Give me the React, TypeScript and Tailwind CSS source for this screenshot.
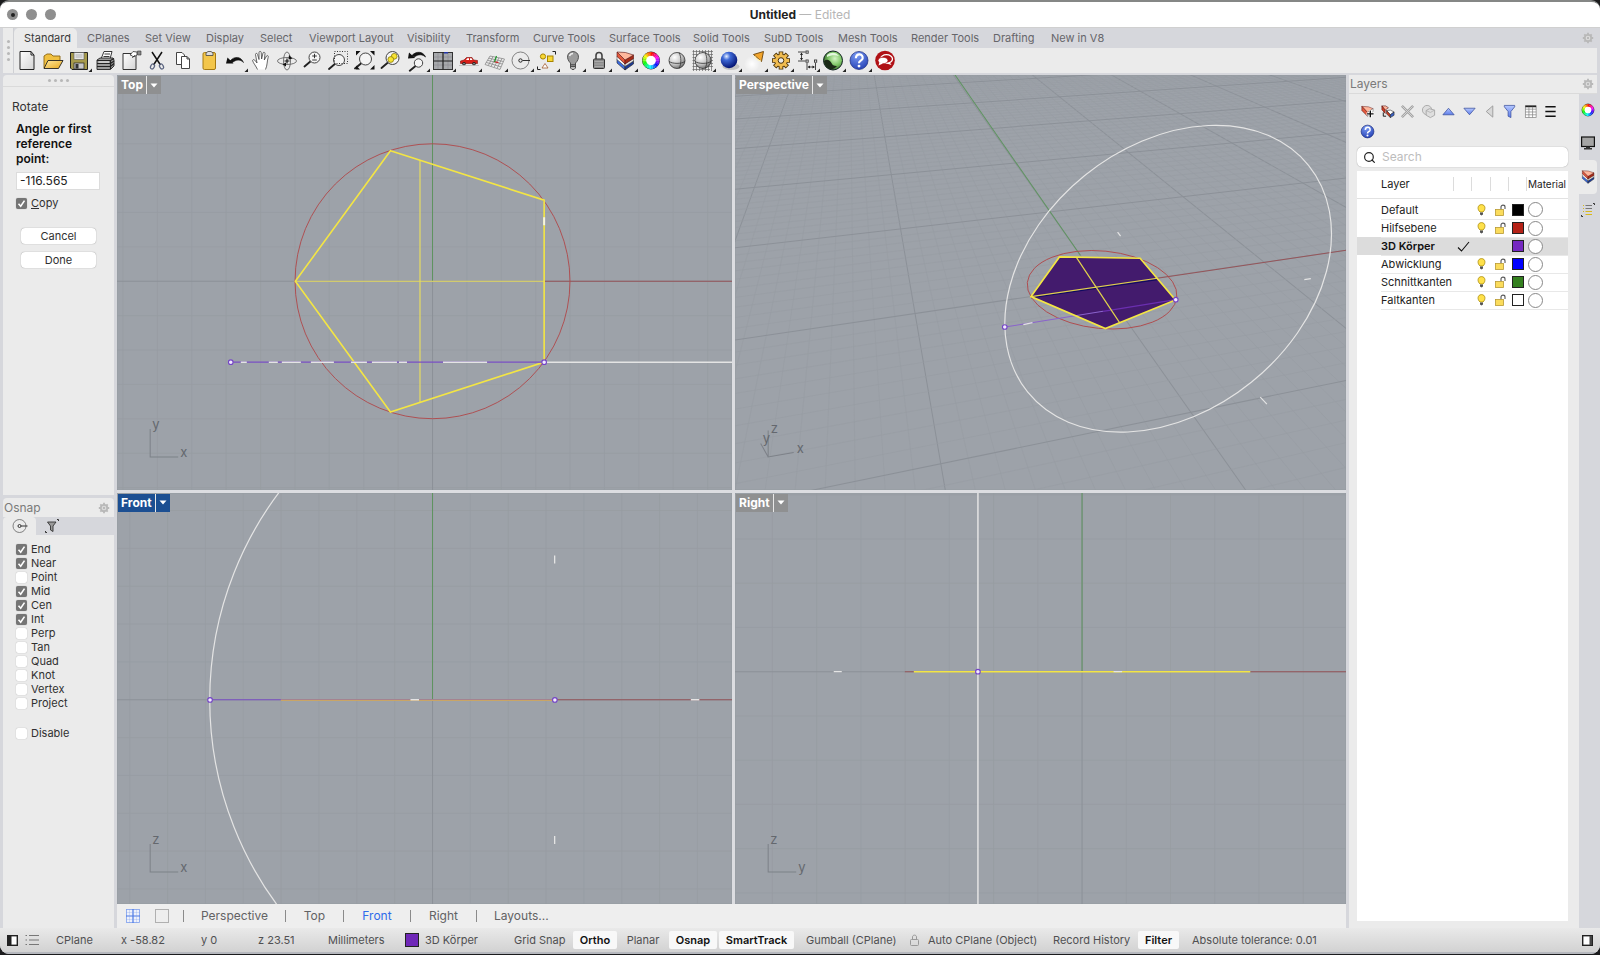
import type { ReactNode } from "react";
import { Search } from "lucide-react";

const TABS = [
  { name: "CPlanes", width: "w-[58px]" },
  { name: "Set View", width: "w-[61px]" },
  { name: "Display", width: "w-[54px]" },
  { name: "Select", width: "w-[49px]" },
  { name: "Viewport Layout", width: "w-[98px]" },
  { name: "Visibility", width: "w-[59px]" },
  { name: "Transform", width: "w-[67px]" },
  { name: "Curve Tools", width: "w-[76px]" },
  { name: "Surface Tools", width: "w-[84px]" },
  { name: "Solid Tools", width: "w-[71px]" },
  { name: "SubD Tools", width: "w-[74px]" },
  { name: "Mesh Tools", width: "w-[73px]" },
  { name: "Render Tools", width: "w-[82px]" },
  { name: "Drafting", width: "w-[58px]" },
  { name: "New in V8", width: "w-[68px]" },
];

const OSNAPS = [
  { name: "End", on: true },
  { name: "Near", on: true },
  { name: "Point", on: false },
  { name: "Mid", on: true },
  { name: "Cen", on: true },
  { name: "Int", on: true },
  { name: "Perp", on: false },
  { name: "Tan", on: false },
  { name: "Quad", on: false },
  { name: "Knot", on: false },
  { name: "Vertex", on: false },
  { name: "Project", on: false },
];

const LAYERS = [
  { name: "Default", color: "#000000", active: false },
  { name: "Hilfsebene", color: "#b52217", active: false },
  { name: "3D Körper", color: "#7528c0", active: true },
  { name: "Abwicklung", color: "#0000ff", active: false },
  { name: "Schnittkanten", color: "#34801f", active: false },
  { name: "Faltkanten", color: "#ffffff", active: false },
];

/* ---------- shared drawings ---------- */

// Gradients used by the toolbar icons, defined once for the page.
function Defs() {
  return (
    <svg width="0" height="0" className="absolute" aria-hidden="true">
      <defs>
        <linearGradient id="paper" x1="0" y1="0" x2="1" y2="1">
          <stop offset="0" stopColor="#fff" />
          <stop offset="1" stopColor="#d4d4d4" />
        </linearGradient>
        <linearGradient id="gold" x1="0" y1="0" x2="1" y2="1">
          <stop offset="0" stopColor="#ffe9a0" />
          <stop offset="1" stopColor="#e8a81c" />
        </linearGradient>
        <linearGradient id="blueTri" x1="0" y1="0" x2="0" y2="1">
          <stop offset="0" stopColor="#b5c8ff" />
          <stop offset="1" stopColor="#5d7cea" />
        </linearGradient>
        <radialGradient id="ball" cx=".35" cy=".3" r=".75">
          <stop offset="0" stopColor="#fff" />
          <stop offset=".6" stopColor="#c4c4c4" />
          <stop offset="1" stopColor="#6c6c6c" />
        </radialGradient>
        <radialGradient id="blueBall" cx=".35" cy=".28" r=".75">
          <stop offset="0" stopColor="#e5efff" />
          <stop offset=".3" stopColor="#3f6ad8" />
          <stop offset="1" stopColor="#02106f" />
        </radialGradient>
        <radialGradient id="greenBall" cx=".6" cy=".4" r=".7">
          <stop offset="0" stopColor="#d4f5c4" />
          <stop offset=".5" stopColor="#7cc465" />
          <stop offset="1" stopColor="#1c4416" />
        </radialGradient>
        <radialGradient id="helpBall" cx=".4" cy=".2" r=".9">
          <stop offset="0" stopColor="#7b9cf5" />
          <stop offset="1" stopColor="#1f3bb0" />
        </radialGradient>
        <radialGradient id="glow" cx=".5" cy=".5" r=".5">
          <stop offset="0" stopColor="#fff" />
          <stop offset="1" stopColor="#fff" stopOpacity="0" />
        </radialGradient>
      </defs>
    </svg>
  );
}

function Wheel({ cx, cy, r }: { cx: number; cy: number; r: number }) {
  const n = 24;
  const mid = r * 0.75;
  const point = (i: number) => {
    const a = (i / n) * Math.PI * 2 - Math.PI / 2;
    return `${cx + mid * Math.cos(a)} ${cy + mid * Math.sin(a)}`;
  };
  return (
    <g fill="none" strokeWidth={r * 0.42}>
      <circle cx={cx} cy={cy} r={r - 0.3} fill="#fff" stroke="#333" strokeWidth="1" />
      {Array.from({ length: n }, (_, i) => (
        <path
          key={i}
          d={`M${point(i)} A${mid} ${mid} 0 0 1 ${point(i + 1.1)}`}
          stroke={`hsl(${(360 - (i * 360) / n) % 360} 95% 52%)`}
        />
      ))}
      <circle cx={cx} cy={cy} r={r * 0.5} fill="#fff" />
    </g>
  );
}

function LayerWedge() {
  return (
    <g strokeLinejoin="round">
      <path d="M5 11 L13 18.500 V22 L5 15 Z" fill="#3c6ce0" stroke="#222" strokeWidth=".6" />
      <path d="M13 18.500 L21.500 13 V16 L13 22 Z" fill="#1d3a94" stroke="#222" strokeWidth=".6" />
      <path d="M5 8 L13 15.500 V18.500 L5 11.500 Z" fill="#fff" stroke="#333" strokeWidth=".5" />
      <path d="M13 15.500 L21.500 10.500 V13 L13 18.500 Z" fill="#e2e2e2" stroke="#333" strokeWidth=".5" />
      <path d="M5 4 L13 12 V16 L5 8.500 Z" fill="#e4593c" stroke="#511" strokeWidth=".6" />
      <path d="M13 12 L21.500 7 V10.500 L13 16 Z" fill="#a52c18" stroke="#511" strokeWidth=".6" />
      <path d="M5 4 L13.500 4.500 L21.500 7 L13 12 Z" fill="#ffb79c" stroke="#511" strokeWidth=".6" />
    </g>
  );
}

function HelpMark({ cx, cy, r }: { cx: number; cy: number; r: number }) {
  return (
    <g>
      <circle cx={cx} cy={cy} r={r} fill="url(#helpBall)" stroke="#15277c" strokeWidth=".7" />
      <path
        d={`M${cx - r * 0.35} ${cy - r * 0.25} C${cx - r * 0.3} ${cy - r * 0.85} ${cx + r * 0.5} ${cy - r * 0.8} ${cx + r * 0.4} ${cy - r * 0.2} C${cx + r * 0.3} ${cy + r * 0.05} ${cx} ${cy} ${cx} ${cy + r * 0.3}`}
        fill="none"
        stroke="#fff"
        strokeWidth={r * 0.24}
      />
      <circle cx={cx} cy={cy + r * 0.62} r={r * 0.16} fill="#fff" />
    </g>
  );
}

function Lens({ x, y, r }: { x: number; y: number; r: number }) {
  return (
    <g>
      <path d={`M${x - r * 0.7} ${y + r * 0.7} L${x - r - 4.5} ${y + r + 3.5}`} stroke="#222" strokeWidth="1.900" strokeLinecap="round" />
      <circle cx={x} cy={y} r={r} fill="#f5f5f5" stroke="#444" strokeWidth="1" />
    </g>
  );
}

function Gear({ className }: { className: string }) {
  return (
    <svg viewBox="0 0 12 12" className={className} aria-hidden="true">
      {[0, 45, 90, 135].map((a) => (
        <path key={a} d="M6 .8 V11.2" stroke="#b8b8b8" strokeWidth="1.800" transform={`rotate(${a} 6 6)`} />
      ))}
      <circle cx="6" cy="6" r="3.200" fill="#dedede" stroke="#b8b8b8" strokeWidth="1.800" />
      <circle cx="6" cy="6" r="1.200" fill="#b8b8b8" />
    </svg>
  );
}

/* ---------- toolbar ---------- */

type Tool = { name: string; menu?: boolean; icon: ReactNode };

const TOOLS: Tool[] = [
  {
    name: "New",
    icon: <path d="M6 3.5 H17 L20 7 V21.5 H6 Z M17 3.5 V7 H20" fill="url(#paper)" stroke="#222" />,
  },
  {
    name: "Open",
    icon: (
      <g stroke="#8a6410" strokeWidth=".9" strokeLinejoin="round">
        <path d="M4 20 V8 L7 6 H11 L13 8 H20 V12" fill="#f0c040" />
        <path d="M4 20.5 L8 12.5 H23 L18.5 20.5 Z" fill="url(#gold)" stroke="#222" />
      </g>
    ),
  },
  {
    name: "Save",
    menu: true,
    icon: (
      <g stroke="#222">
        <path d="M4.500 4.500 H21.500 V21.500 H6 L4.500 20 Z" fill="#a69a4c" />
        <rect x="8" y="4.500" width="10" height="7" fill="#e8e8e8" stroke="#555" strokeWidth=".6" />
        <path d="M9.500 7 H16.500 M9.500 9 H16.500" stroke="#999" strokeWidth=".7" />
        <rect x="8" y="15" width="10" height="6" fill="#c8c8c8" strokeWidth=".7" />
        <rect x="9.500" y="16" width="3" height="4.500" fill="#333" stroke="none" />
      </g>
    ),
  },
  {
    name: "Print",
    icon: (
      <g stroke="#222" strokeWidth=".9" strokeLinejoin="round">
        <path d="M9 11 L12 3.500 H20 L18 11 Z" fill="#fff" />
        <path d="M12.500 6 H18 M11.500 8.500 H17.500" />
        <path d="M5 12 L8 10 H21 L22 12 V18 L18.500 21.500 H5 Z" fill="#9b9b9b" />
        <path d="M5 12.500 H18.500 L22 10.500 M5 15.500 H18.500 L22 13 M5 18.500 H18.500 L22 15.500 M18.500 12 V21" strokeWidth="1.200" />
        <path d="M6.500 14 H17" stroke="#fff" />
      </g>
    ),
  },
  {
    name: "Document Properties",
    icon: (
      <g stroke="#333" strokeLinejoin="round">
        <path d="M5 5.500 H18 V21.500 H5 Z" fill="url(#paper)" />
        <path d="M12 7 L15 3.500 L19 4 V7 L15.500 9 L14 7.500 Z" fill="#fff" strokeWidth=".8" />
        <path d="M14 9.500 L17 7.500" />
        <rect x="19.500" y="3" width="3.500" height="4" fill="#888" strokeWidth=".6" />
      </g>
    ),
  },
  {
    name: "Cut",
    icon: (
      <g fill="none">
        <path d="M8 4 L16.500 17 M18 4 L9.500 17" stroke="#111" strokeWidth="1.500" />
        <ellipse cx="8.500" cy="18.500" rx="1.800" ry="2.600" transform="rotate(30 8.500 18.500)" stroke="#5a6480" strokeWidth="1.200" />
        <ellipse cx="17.500" cy="18.500" rx="1.800" ry="2.600" transform="rotate(-30 17.500 18.500)" stroke="#5a6480" strokeWidth="1.200" />
      </g>
    ),
  },
  {
    name: "Copy",
    icon: (
      <g fill="#fff" stroke="#444">
        <path d="M6.500 4.500 H12 L14.500 7 V16.500 H6.500 Z" />
        <path d="M11.500 8.500 H17 L19.500 11 V20.500 H11.500 Z M17 8.500 V11 H19.500" />
      </g>
    ),
  },
  {
    name: "Paste",
    icon: (
      <g stroke="#a67a12">
        <rect x="7" y="4.500" width="12.500" height="17" rx="1.500" fill="#f3c64b" />
        <path d="M10 7.500 V5 L12 3.500 H15 L17 5 V7.500 Z" fill="#ddd" stroke="#444" strokeWidth=".8" />
      </g>
    ),
  },
  {
    name: "Undo",
    menu: true,
    icon: (
      <g>
        <path d="M8 13 C12 8 19 8 21.500 14.500 C18 11 14 11.500 10.500 14.500 Z" fill="#111" stroke="#111" strokeWidth=".6" />
        <path d="M4 15.500 L5.500 9.500 L11.500 15.500 Z" fill="#111" />
      </g>
    ),
  },
  {
    name: "Pan",
    icon: (
      <path
        d="M9.500 21.500 C8 18 5.500 15.500 4.500 12.500 C5 11.200 6.500 11.500 7.500 13 L9 15 L7.500 6.500 C7.500 5 9.200 5 9.600 6.500 L11 11.500 L11 4.500 C11.200 3 13 3 13.200 4.500 L13.600 11 L15 5 C15.500 3.800 17 4.200 17 5.500 L16.300 12 L18.500 8 C19.300 7 20.700 7.800 20.200 9.200 C19 13 19.500 17 17.500 21.500"
        fill="#fff"
        stroke="#444"
        strokeWidth=".8"
      />
    ),
  },
  {
    name: "Rotate View",
    icon: (
      <g fill="none" stroke="#555" strokeWidth=".8">
        <ellipse cx="13" cy="13" rx="9.500" ry="3.500" />
        <ellipse cx="13" cy="13" rx="3.500" ry="9" />
        <path d="M10.500 13 H15.500 M13 10.500 V15.500" stroke="#111" strokeWidth="1.200" />
        <path d="M12 14.500 L8.500 16.500 L12 18.500 Z M15 7 L18.500 10.500 L14.500 11.500 Z" fill="#111" stroke="none" />
      </g>
    ),
  },
  {
    name: "Zoom Dynamic",
    icon: (
      <g>
        <Lens x={14.5} y={9.5} r={5.5} />
        <path d="M12.200 8 H16.800 M14.500 5.800 V10.200 M12.200 12 H16.800" stroke="#222" strokeWidth=".9" />
      </g>
    ),
  },
  {
    name: "Zoom Window",
    icon: (
      <g>
        <Lens x={13} y={12} r={5.5} />
        <rect x="8.500" y="3.500" width="13" height="12" fill="none" stroke="#333" strokeDasharray="1 1.500" />
      </g>
    ),
  },
  {
    name: "Zoom Extents",
    icon: (
      <g>
        <Lens x={13.5} y={11} r={6} />
        <path d="M4 3 H8.500 L4 7.500 Z M22.500 3 H18 L22.500 7.500 Z M4 21.500 H8 L4 17.500 Z M22.500 21.500 H18 L22.500 17 Z" fill="#111" />
      </g>
    ),
  },
  {
    name: "Zoom Selected",
    icon: (
      <g>
        <Lens x={14.5} y={10} r={6.5} />
        <circle cx="16.200" cy="8.300" r="2.900" fill="#f8e434" stroke="#7a6c00" strokeWidth=".7" />
        <circle cx="12.800" cy="11.500" r="2.900" fill="#f8e434" stroke="#7a6c00" strokeWidth=".7" />
      </g>
    ),
  },
  {
    name: "Undo View",
    menu: true,
    icon: (
      <g>
        <Lens x={14.5} y={15} r={4.2} />
        <path d="M8 7.500 C12 3 19 3 21.500 9 C18.500 6 14 6 10.500 9 Z" fill="#111" stroke="#111" strokeWidth=".7" />
        <path d="M4 10.500 L5 4.500 L11 10 Z" fill="#111" />
      </g>
    ),
  },
  {
    name: "4 Viewports",
    menu: true,
    icon: (
      <g>
        <rect x="3.500" y="4.500" width="19" height="17" fill="#a7a9ac" stroke="#333" />
        <path d="M8 5 V21 M18 5 V21 M4 9 H22 M4 17 H22" stroke="#8a8c90" strokeWidth=".6" />
        <path d="M13 4.500 V21.500 M3.500 13 H22.500" stroke="#222" strokeWidth="1.200" />
        <rect x="14" y="4" width="4" height="1.500" fill="#2335a8" />
      </g>
    ),
  },
  {
    name: "Set View",
    menu: true,
    icon: (
      <g>
        <path d="M4.500 15.500 V13 L8 12 L10.500 9.500 H16 L17.500 12 L21.500 12.500 V15.500 Z" fill="#d8201a" stroke="#7d0c08" strokeWidth=".6" />
        <path d="M10 12 L11.300 10.300 H13 V12 Z M14 10.300 H15.500 L16.500 12 H14 Z" fill="#fff" />
        <circle cx="8" cy="15.800" r="1.800" fill="#222" />
        <circle cx="18" cy="15.800" r="1.800" fill="#222" />
        <circle cx="8" cy="15.800" r=".7" fill="#ccc" />
        <circle cx="18" cy="15.800" r=".7" fill="#ccc" />
        <path d="M3 17.500 H23" stroke="#b5b5b5" strokeWidth=".7" />
      </g>
    ),
  },
  {
    name: "Set CPlane",
    menu: true,
    icon: (
      <g fill="none" stroke="#8a8a8a" strokeWidth=".8">
        <path d="M8 8 L22.500 11 L18 21.500 L3 16.500 Z" />
        <path d="M6.800 10.200 L21.300 13.500 M5.500 12.300 L20.200 16 M4.200 14.400 L19 18.800 M11 8.600 L6.300 17.500 M14 9.200 L9 18.500 M17 9.800 L12 19.500 M20 10.400 L15 20.500" />
        <path d="M12 13.500 L16.500 14.600" stroke="#d02020" strokeWidth="1.200" />
        <path d="M12.500 14 L14.500 8" stroke="#1e9a2c" strokeWidth="1.200" />
      </g>
    ),
  },
  {
    name: "Object Snap",
    menu: true,
    icon: (
      <g fill="none" stroke="#666">
        <circle cx="12.500" cy="12.500" r="8.500" strokeWidth=".8" />
        <circle cx="12.500" cy="12.500" r="1.700" stroke="#222" />
        <path d="M14.500 12.500 H22" stroke="#333" />
      </g>
    ),
  },
  {
    name: "Select",
    menu: true,
    icon: (
      <g stroke="#a88400">
        <circle cx="9" cy="8.500" r="2.600" fill="#f8d834" />
        <rect x="13.500" y="8" width="5.500" height="5.500" fill="#f8d834" />
        <path d="M11 15.500 L14 20 H8 Z" fill="#fff" stroke="#a05a30" strokeWidth=".8" />
        <path d="M18.500 3.500 H21.500 V6.500 M3.500 18.500 V21.500 H6.500" fill="none" stroke="#222" />
      </g>
    ),
  },
  {
    name: "Hide",
    menu: true,
    icon: (
      <g stroke="#444" strokeWidth=".9">
        <path d="M10.500 15 C6 11 6.500 4 13 3.500 C19.500 4 20 11 15.500 15 V17 H10.500 Z" fill="#9c9c9c" />
        <path d="M9.500 8 C10 6.500 11.500 5.500 13 5.500" fill="none" stroke="#eee" strokeWidth="1.500" />
        <path d="M10.500 17 H15.500 V20 L14 21.500 H12 L10.500 20 Z M10.500 18.500 H15.500" fill="#bbb" />
      </g>
    ),
  },
  {
    name: "Lock",
    menu: true,
    icon: (
      <g>
        <path d="M10 12 V7.500 C10 3.500 16 3.500 16 7.500 V12" fill="none" stroke="#444" strokeWidth="1.600" />
        <rect x="7.500" y="11" width="11" height="9.500" rx="1" fill="#8b8b8b" stroke="#333" />
        <path d="M8.500 13.500 H17.500 M8.500 16 H17.500 M8.500 18.500 H17.500" stroke="#b8b8b8" strokeWidth=".7" />
      </g>
    ),
  },
  { name: "Layers", menu: true, icon: <LayerWedge /> },
  { name: "Properties", menu: true, icon: <Wheel cx={13} cy={12.5} r={8.8} /> },
  {
    name: "Shade",
    icon: (
      <g fill="none" stroke="#333" strokeWidth=".8">
        <circle cx="13" cy="12.500" r="8" fill="url(#ball)" />
        <path d="M15 4.500 C17.500 9 17.500 16 15 20.500 M5 13.500 C9 16 17 16 21 13.500" />
      </g>
    ),
  },
  {
    name: "Shaded Viewport",
    menu: true,
    icon: (
      <g fill="none" stroke="#333" strokeWidth=".8">
        <path d="M3.500 2 V23 M6.500 2 V23 M9.500 2 V23 M12.500 2 V23 M15.500 2 V23 M18.500 2 V23 M21.500 2 V23 M2.500 3.500 H23 M2.500 6.500 H23 M2.500 9.500 H23 M2.500 12.500 H23 M2.500 15.500 H23 M2.500 18.500 H23 M2.500 21.500 H20" stroke="#666" strokeWidth=".7" />
        <circle cx="13" cy="12.500" r="8" fill="url(#ball)" />
        <path d="M15 4.500 C17.500 9 17.500 16 15 20.500 M5 13.500 C9 16 17 16 21 13.500" />
      </g>
    ),
  },
  {
    name: "Render",
    menu: true,
    icon: (
      <g>
        <ellipse cx="15" cy="18.500" rx="8.500" ry="3.500" fill="#999" opacity=".5" />
        <circle cx="13" cy="12" r="8.300" fill="url(#blueBall)" />
      </g>
    ),
  },
  {
    name: "Spotlight",
    menu: true,
    icon: (
      <g>
        <circle cx="10" cy="16" r="8" fill="url(#glow)" />
        <path d="M11.500 6.500 L21.500 3.500 L19.500 13.500 Z" fill="#f2a52c" stroke="#6a4208" strokeWidth=".9" />
        <path d="M12.500 8 C14 11 16.500 12.500 19 13" fill="none" stroke="#fff1b8" strokeWidth="1.200" />
      </g>
    ),
  },
  {
    name: "Options",
    menu: true,
    icon: (
      <g>
        {[0, 45, 90, 135].map((a) => (
          <path key={a} d="M13 3.500 V21.500" stroke="#4a3208" strokeWidth="4.600" transform={`rotate(${a} 13 12.500)`} />
        ))}
        <circle cx="13" cy="12.500" r="6.800" fill="#4a3208" />
        {[0, 45, 90, 135].map((a) => (
          <path key={a} d="M13 4.300 V20.700" stroke="#f0bc50" strokeWidth="2.800" transform={`rotate(${a} 13 12.500)`} />
        ))}
        <circle cx="13" cy="12.500" r="6" fill="#f0bc50" />
        <circle cx="13" cy="12.500" r="2.800" fill="#ebebeb" stroke="#4a3208" />
      </g>
    ),
  },
  {
    name: "Dimension",
    menu: true,
    icon: (
      <g fill="none" stroke="#333" strokeWidth=".9">
        <path d="M4 4 H11.500 M4 13 H11.500 M7.500 5 V12" />
        <path d="M7.500 4.500 L6 7 H9 Z M7.500 12.500 L6 10 H9 Z" fill="#222" stroke="none" />
        <rect x="12" y="3" width="2.200" height="2.200" fill="#fff" />
        <rect x="12" y="12" width="2.200" height="2.200" fill="#fff" />
        <rect x="20.500" y="12" width="2.200" height="2.200" fill="#fff" />
        <path d="M13 15 V22 M21.500 15 V22 M14.500 19 H20" />
        <path d="M13.500 19 L16 17.500 V20.500 Z M21 19 L18.500 17.500 V20.500 Z" fill="#222" stroke="none" />
      </g>
    ),
  },
  {
    name: "Grasshopper",
    menu: true,
    icon: (
      <g>
        <circle cx="13" cy="12.500" r="9.500" fill="url(#greenBall)" stroke="#122" />
        <path d="M4 13 C7 10.500 10 12 11.500 15 C12 17 15 18.500 17 18 C15 21 11 22 8.500 20.500 C6 19 4.500 16.500 4 13 Z" fill="#1b2a18" />
        <path d="M7 7 C11 3.500 16 4 19 8 C15 6.500 11 7 7 9 Z" fill="#f2fff0" opacity=".85" />
      </g>
    ),
  },
  { name: "Help", menu: true, icon: <HelpMark cx={13} cy={12.5} r={9} /> },
  {
    name: "Forum",
    icon: (
      <g>
        <circle cx="13" cy="12.500" r="9.800" fill="#b01116" />
        <path d="M17.500 14 L19.500 17 L14.500 15.500 Z" fill="#fff" />
        <ellipse cx="14.500" cy="11" rx="6" ry="4.300" fill="#b01116" stroke="#fff" strokeWidth="1.300" />
        <ellipse cx="11" cy="12.500" rx="5" ry="3.300" fill="#fff" stroke="#b01116" strokeWidth=".8" />
        <path d="M7.500 14 L6.500 17.500 L11 15.500 Z" fill="#fff" />
      </g>
    ),
  },
];

function Toolbar() {
  return (
    <div className="flex bg-[#ebebeb]">
      <div className="flex w-[11px] shrink-0 flex-col items-center justify-center gap-[3px] border-r border-[#cfd0d4]">
        {[0, 1, 2, 3].map((i) => (
          <span key={i} className="size-[3px] rounded-full bg-[#b8b8b8]" />
        ))}
      </div>
      <div className="min-w-0 flex-1">
        <div className="flex h-5 items-center bg-[#d6d7dc] text-[11px] text-[#66666a]">
          <button className="h-full w-[63px] shrink-0 rounded-t-[5px] bg-[#ebebeb] pl-[10px] text-left text-[#3a3a3a]">Standard</button>
          <nav className="flex min-w-0 flex-1 overflow-hidden pl-[10px]">
            {TABS.map((t) => (
              <button key={t.name} className={`shrink-0 whitespace-nowrap text-left ${t.width}`}>
                {t.name}
              </button>
            ))}
          </nav>
          <Gear className="mr-[3px] size-3" />
        </div>
        <div className="flex h-[25px] overflow-hidden">
          {TOOLS.map((t) => (
            <button key={t.name} aria-label={t.name} className="h-6 w-[26px] shrink-0">
              <svg viewBox="0 0 26 24" className="h-6 w-[26px]" fill="none">
                {t.icon}
                {t.menu && <path d="M26 20.500 V24 H22.500 Z" fill="#222" />}
              </svg>
            </button>
          ))}
        </div>
      </div>
    </div>
  );
}

/* ---------- left column ---------- */

function Check({ label, on, children }: { label: string; on: boolean; children?: ReactNode }) {
  return (
    <label className="flex h-[14px] items-center gap-1 text-[11px] text-[#303030]">
      <span className="relative size-[11px]">
        <input
          type="checkbox"
          defaultChecked={on}
          aria-label={label}
          className="peer block size-[11px] appearance-none rounded-[2px] bg-white shadow-[0_0_1px_rgba(0,0,0,0.35)] checked:bg-[#757575]"
        />
        <svg viewBox="0 0 11 11" className="pointer-events-none absolute inset-0 hidden size-[11px] peer-checked:block">
          <path d="M2.500 5.800 L4.700 8.200 L8.500 2.600" fill="none" stroke="#fff" strokeWidth="1.600" />
        </svg>
      </span>
      {children ?? label}
    </label>
  );
}

function CommandPanel() {
  return (
    <section className="h-[420px] shrink-0 rounded-t-[4px] bg-[#ebebeb]">
      <div className="flex h-3 items-center justify-center gap-[3px] border-b border-[#dadada]">
        {[0, 1, 2, 3].map((i) => (
          <span key={i} className="size-[3px] rounded-full bg-[#b8b8b8]" />
        ))}
      </div>
      <h2 className="mt-3 ml-[9px] text-[12px] leading-[15px] text-[#333]">Rotate</h2>
      <div className="mt-[7px] ml-[13px]">
        <label htmlFor="angle" className="block w-[90px] text-[12px] leading-[15px] font-semibold text-[#111]">
          Angle or first reference point:
        </label>
        <input
          id="angle"
          defaultValue="-116.565"
          className="mt-[6px] mb-[6px] block h-[18px] w-[84px] border border-[#dcdcdc] bg-white px-[3px] text-[12px] text-[#222] outline-none"
        />
        <Check label="Copy" on>
          <span>
            <u>C</u>opy
          </span>
        </Check>
      </div>
      <div className="mt-[18px] flex flex-col items-center gap-2">
        <button className="h-4 w-[75px] rounded-[4px] bg-white text-[11px] leading-4 text-[#303030] shadow-[0_0_1px_rgba(0,0,0,0.5)]">Cancel</button>
        <button className="h-4 w-[75px] rounded-[4px] bg-white text-[11px] leading-4 text-[#303030] shadow-[0_0_1px_rgba(0,0,0,0.5)]">Done</button>
      </div>
    </section>
  );
}

function OsnapPanel() {
  return (
    <section className="min-h-0 flex-1 overflow-hidden rounded-t-[4px] bg-[#ebebeb]">
      <header className="flex h-[19px] items-center justify-between px-1 pl-px text-[12px] text-[#7a7a7a]">
        <h2>Osnap</h2>
        <Gear className="size-3" />
      </header>
      <div className="flex h-[18px] bg-[#d6d7dc]">
        <button aria-label="Snaps" className="flex w-[33px] items-center justify-center rounded-t-[4px] bg-[#ebebeb]">
          <svg viewBox="0 0 16 16" className="size-4" fill="none" stroke="#666">
            <circle cx="7.500" cy="8" r="6.500" strokeWidth=".8" />
            <circle cx="7.500" cy="8" r="1.500" stroke="#333" />
            <path d="M9 8 H15.500" stroke="#333" />
          </svg>
        </button>
        <button aria-label="Selection filter" className="flex w-8 items-center justify-center">
          <svg viewBox="0 0 16 16" className="size-4" fill="none" stroke="#333">
            <path d="M3.500 4 H12 L9 8 V13.500 L6.500 12 V8 Z" fill="#9a9a9a" strokeWidth=".9" />
            <path d="M13 1.500 H14.500 V3 M1.500 13 V14.500 H3" />
          </svg>
        </button>
      </div>
      <div className="mt-[7px] ml-[13px]">
        {OSNAPS.map((o) => (
          <Check key={o.name} label={o.name} on={o.on} />
        ))}
        <div className="mt-4">
          <Check label="Disable" on={false} />
        </div>
      </div>
    </section>
  );
}

/* ---------- viewports ---------- */

const MINOR = "#979ca3";
const MAJOR = "#8c9198";
const RED = "#95555a";
const CURVE_RED = "#b0474a";
const GREEN = "#5f9460";
const YELLOW = "#f3e544";
const PURPLE = "#7a4fc4";
const WHITE = "#e4e4e4";

type GridProps = { ox: number; oy: number; step: number; x0: number; x1: number; y0: number; y1: number };

function PlanGrid({ ox, oy, step, x0, x1, y0, y1 }: GridProps) {
  const ks = Array.from({ length: 41 }, (_, i) => i - 20).filter((k) => k !== 0);
  return (
    <g stroke={MINOR}>
      {ks.map((k) => (
        <path key={k} d={`M${ox + k * step} ${y0} V${y1} M${x0} ${oy + k * step} H${x1}`} strokeWidth=".8" />
      ))}
      <path d={`M${ox} ${y0} V${y1} M${x0} ${oy} H${x1}`} stroke={MAJOR} />
    </g>
  );
}

// World axes project towards two vanishing points on one level horizon.
const ORIGIN = { x: 1101.9, y: 285.8 };
const VX = { x: 3549.3, y: -73.3 };
const VY = { x: 849, y: -73.3 };
const ALPHA = 0.007088;
const BETA = 0.02599;

function project(x: number, y: number) {
  const w = 1 + x * ALPHA + y * BETA;
  return {
    x: (ORIGIN.x + x * ALPHA * VX.x + y * BETA * VY.x) / w,
    y: (ORIGIN.y + x * ALPHA * VX.y + y * BETA * VY.y) / w,
  };
}

function PerspectiveGrid() {
  const lines: { d: string; major: boolean }[] = [];
  for (let k = -50; k <= 64; k++) {
    const p = project(k, 0);
    const m = (p.x - VY.x) / (p.y - VY.y);
    lines.push({ d: `M${VY.x + m * (70 - VY.y)} 70 L${VY.x + m * (495 - VY.y)} 495`, major: k % 10 === 0 });
  }
  for (let k = -24; k <= 90; k++) {
    const p = project(0, k);
    const m = (p.y - VX.y) / (p.x - VX.x);
    lines.push({ d: `M730 ${VX.y + m * (730 - VX.x)} L1350 ${VX.y + m * (1350 - VX.x)}`, major: k % 10 === 0 });
  }
  return (
    <g>
      {lines.map((l, i) => (
        <path key={i} d={l.d} stroke={l.major ? MAJOR : MINOR} strokeWidth={l.major ? 1 : 0.6} />
      ))}
    </g>
  );
}

function AxisIcon({ x, y, up, side }: { x: number; y: number; up: string; side: string }) {
  return (
    <g className="text-[13px]" fill="#64686e">
      <path d={`M${x} ${y - 28} V${y} H${x + 28}`} fill="none" stroke="#7d8188" />
      <text x={x + 2} y={y - 28}>{up}</text>
      <text x={x + 30} y={y}>{side}</text>
    </g>
  );
}

function Handle({ x, y }: { x: number; y: number }) {
  return <circle cx={x} cy={y} r="2.300" fill="#f2eaff" stroke="#7444c6" strokeWidth="1.100" />;
}

function Viewport({ name, box, active, children }: { name: string; box: string; active?: boolean; children: ReactNode }) {
  const tone = active ? "bg-[#1c4f92]" : "bg-[#8f9091]";
  return (
    <section className="relative min-h-0 min-w-0 overflow-hidden bg-[#9da2a9] shadow-[inset_0_0_1px_#7c8086]">
      <svg viewBox={box} preserveAspectRatio="xMidYMid slice" className="block h-full w-full" fill="none">
        {children}
      </svg>
      <div className="absolute top-px left-px flex h-[18px] text-[12px] font-bold text-white">
        <button className={`px-[3px] ${tone}`}>{name}</button>
        <span className="w-px bg-[#e8e8e8]" />
        <button aria-label={`${name} menu`} className={`flex w-[14px] items-center justify-center ${tone}`}>
          <svg viewBox="0 0 8 5" className="h-[5px] w-2">
            <path d="M.5 .5 H7.500 L4 4.500 Z" fill="#fff" />
          </svg>
        </button>
      </div>
    </section>
  );
}

function Viewports() {
  return (
    <div className="grid min-h-0 flex-1 grid-cols-[615fr_611fr] grid-rows-[414fr_411fr] gap-[3px] bg-[#dcdde1]">
      <Viewport name="Top" box="117 75 615 414">
        <PlanGrid ox={432.5} oy={281} step={34.35} x0={110} x1={740} y0={70} y1={495} />
        <path d="M432.500 70 V281" stroke={GREEN} />
        <path d="M544 281 H740" stroke={RED} />
        <circle cx="432.500" cy="281" r="137.300" stroke={CURVE_RED} strokeWidth=".9" />
        <path d="M295.500 281 H544 M420 160.500 V402" stroke="#e6dc60" strokeWidth="1.200" />
        <path d="M390.500 150.700 L544 200 V361.700 L390.500 411.600 L295.500 281 Z" stroke={YELLOW} strokeWidth="1.600" />
        <path d="M544 217 V225" stroke="#f5f5e0" strokeWidth="2" />
        <path d="M231 361.800 H544" stroke={PURPLE} strokeWidth="1.300" />
        <path
          d="M241 361.800 H247 M269 361.800 H278 M282 361.800 H301 M311 361.800 H334 M351 361.800 H367 M372 361.800 H397 M399 361.800 H407 M443 361.800 H487 M544 361.800 H740"
          stroke={WHITE}
          strokeWidth="1.500"
        />
        <Handle x={231} y={361.8} />
        <Handle x={544} y={361.8} />
        <AxisIcon x={150.5} y={456.5} up="y" side="x" />
      </Viewport>

      <Viewport name="Perspective" box="735 75 611 414">
        <PerspectiveGrid />
        <path d="M951.700 70 L1080.300 255" stroke={GREEN} />
        <path d="M1157 278 L1350 249.400" stroke={RED} />
        <ellipse cx="1102" cy="289.500" rx="75" ry="38.700" transform="rotate(5.600 1102 289.500)" stroke={CURVE_RED} strokeWidth=".9" />
        <path d="M1059.400 256.700 L1140 258 L1175.300 299.700 L1105.300 328.300 L1031 296.300 Z" fill="#431b6d" />
        <path d="M1031 297.500 L1157 279.500" stroke="#0c0a60" />
        <path d="M1004.800 326.700 L1103 311" stroke="#8a63cc" />
        <path d="M1103 311 L1175.600 299.400" stroke="#6b2fb0" strokeWidth="1.200" />
        <path d="M1031 296.300 L1157 278 M1076 256.700 L1119.500 322.300" stroke="#e0d24c" strokeWidth="1.200" />
        <path d="M1059.400 256.700 L1140 258 L1175.300 299.700 L1105.300 328.300 L1031 296.300 Z" stroke={YELLOW} strokeWidth="1.700" />
        <ellipse cx="1168" cy="278.500" rx="180.300" ry="132.600" transform="rotate(-38.950 1168 278.500)" stroke={WHITE} strokeWidth="1.200" />
        <path d="M1023.400 324.300 L1032.500 322.300 M1117.500 232 L1120.500 236 M1304 279.300 L1310.500 278.300 M1260 396.700 L1266.600 403.700" stroke={WHITE} strokeWidth="1.200" />
        <Handle x={1004.8} y={326.7} />
        <Handle x={1175.6} y={299.4} />
        <path d="M768.500 430 V456.500 L794 452 M768.500 456.500 L761 443" stroke="#7d8188" />
        <g className="text-[13px]" fill="#64686e">
          <text x="771" y="433">z</text>
          <text x="763" y="443">y</text>
          <text x="797" y="453">x</text>
        </g>
      </Viewport>

      <Viewport name="Front" box="117 492.500 615 411" active>
        <PlanGrid ox={432.5} oy={699} step={37.8} x0={110} x1={740} y0={485} y1={910} />
        <path d="M432.500 485 V699" stroke={GREEN} />
        <path d="M555 699 H740" stroke={RED} />
        <path d="M210 699 H555" stroke={PURPLE} />
        <path d="M281 699.500 H553" stroke="#c9a566" strokeWidth="1.300" />
        <circle cx="554.700" cy="699.200" r="344.700" stroke={WHITE} strokeWidth="1.200" />
        <path d="M410.500 699 H419 M690.500 699 H699 M554.500 555 V563 M554.500 835 V843" stroke={WHITE} strokeWidth="1.300" />
        <Handle x={210.3} y={699.2} />
        <Handle x={554.7} y={699.2} />
        <AxisIcon x={150.5} y={871} up="z" side="x" />
      </Viewport>

      <Viewport name="Right" box="735 492.500 611 411">
        <PlanGrid ox={1082} oy={671} step={44.18} x0={730} x1={1350} y0={485} y1={910} />
        <path d="M1082 485 V671" stroke={GREEN} />
        <path d="M905 671 H914 M1250 671 H1350" stroke={RED} />
        <path d="M914 671 H1250" stroke={YELLOW} strokeWidth="1.600" />
        <path d="M978 485 V910" stroke={WHITE} strokeWidth="1.500" />
        <path d="M834 671 H842 M1113.500 671 H1122" stroke={WHITE} strokeWidth="1.300" />
        <Handle x={978} y={671} />
        <AxisIcon x={768.5} y={871} up="z" side="y" />
      </Viewport>
    </div>
  );
}

function ViewportTabs() {
  const bar = <span className="h-3 w-px bg-[#8a8a8a]" />;
  return (
    <div className="flex h-6 shrink-0 items-center bg-[#eeeeee] pb-px pl-[9px] text-[12px] text-[#626264]">
      <button aria-label="Four viewports" className="w-[29px]">
        <svg viewBox="0 0 14 14" className="block size-[14px]" fill="#eef1fa" stroke="#7d9fee">
          <rect x=".5" y=".5" width="13" height="13" strokeWidth=".8" />
          <path d="M7 0 V14 M0 7 H14" stroke="#4b79e4" strokeWidth="1.200" />
          <path d="M0 3.500 H14 M0 10.500 H14 M3.500 0 V14 M10.500 0 V14" strokeWidth=".3" />
        </svg>
      </button>
      <button aria-label="Single viewport" className="w-7">
        <svg viewBox="0 0 14 14" className="block size-[14px]" fill="none" stroke="#b0b0b0">
          <rect x=".5" y=".5" width="13" height="13" />
        </svg>
      </button>
      {bar}
      <button className="w-[101px]">Perspective</button>
      {bar}
      <button className="w-[57px]">Top</button>
      {bar}
      <button className="w-[66px] text-[#2f6bea]">Front</button>
      {bar}
      <button className="w-[65px]">Right</button>
      {bar}
      <button className="ml-[17px]">Layouts...</button>
    </div>
  );
}

/* ---------- layers panel ---------- */

const LAYER_TOOLS: Tool[] = [
  {
    name: "New layer",
    icon: (
      <g>
        <path d="M2 2.500 L9 3 L14 5 L8 9 Z" fill="#ffb79c" stroke="#733" strokeWidth=".6" />
        <path d="M2 2.500 L8 9 V13 L2 7 Z" fill="#e4593c" stroke="#511" strokeWidth=".6" />
        <path d="M8 9 L14 5 V8 L8 13 Z" fill="#fff" stroke="#777" strokeWidth=".6" />
        <path d="M7 10.500 H15 M11 6.500 V14.500" stroke="#fff" strokeWidth="3" />
        <path d="M7.500 10.500 H14.500 M11 7 V14" stroke="#111" strokeWidth="1.500" />
      </g>
    ),
  },
  {
    name: "New sublayer",
    icon: (
      <g strokeWidth=".6">
        <path d="M2 2 L6 2 L9 4 L5.500 6.500 Z" fill="#ffb79c" stroke="#511" />
        <path d="M2 2 L5.500 6.500 V10 L2 6 Z" fill="#d13c22" stroke="#511" />
        <path d="M7 7 L11 6.500 L15 8.500 L11 11.500 Z" fill="#fff" stroke="#222" />
        <path d="M7 7 L11 11.500 V14.500 L7 10.500 Z" fill="#d13c22" stroke="#222" />
        <path d="M11 11.500 L15 8.500 V12 L11 14.500 Z" fill="#3a62c8" stroke="#222" />
        <path d="M3.500 9 V13 H6.500" fill="none" stroke="#111" strokeWidth="1" />
      </g>
    ),
  },
  {
    name: "Delete",
    icon: (
      <g>
        <path d="M2 2 L14 14 M14 2 L2 14" stroke="#a5a5a5" strokeWidth="2.800" />
        <path d="M2.500 2.500 L13.500 13.500 M13.500 2.500 L2.500 13.500" stroke="#d5d5d5" strokeWidth="1" />
      </g>
    ),
  },
  {
    name: "Duplicate",
    icon: (
      <g fill="#dedede" stroke="#a8a8a8">
        <circle cx="6.500" cy="6.500" r="5" />
        <path d="M5.500 7 L9 5 L14.500 6.500 V12 L10 14.500 L5.500 12 Z" />
        <path d="M5.500 7 L10 9 L14.500 6.500" fill="none" strokeWidth=".7" />
      </g>
    ),
  },
  { name: "Move up", icon: <path d="M2 11.500 L8 4.500 L14 11.500 Z" fill="url(#blueTri)" stroke="#3b509c" strokeWidth=".8" /> },
  { name: "Move down", icon: <path d="M2 4.500 L8 11.500 L14 4.500 Z" fill="url(#blueTri)" stroke="#3b509c" strokeWidth=".8" /> },
  { name: "Move out", icon: <path d="M11.500 2 L4.500 8 L11.500 14 Z" fill="#d8d8d8" stroke="#9c9c9c" /> },
  { name: "Filter", icon: <path d="M2.500 1.500 H13.500 V3 L9.500 8 V14.500 L6.500 13 V8 L2.500 3 Z" fill="url(#blueTri)" stroke="#3b509c" strokeWidth=".8" /> },
  {
    name: "Columns",
    icon: (
      <g stroke="#888" strokeWidth=".8">
        <rect x="2.500" y="2" width="11.500" height="12.500" fill="#fff" />
        <path d="M2.500 2.500 H14" stroke="#222" strokeWidth="2" />
        <path d="M2.500 5.500 H14 M2.500 8.500 H14 M2.500 11.500 H14 M6.300 3 V14.500 M10.200 3 V14.500" />
      </g>
    ),
  },
  { name: "Menu", icon: <path d="M2.500 3 H13.500 M2.500 8 H13.500 M2.500 13 H13.500" stroke="#111" strokeWidth="1.500" /> },
  { name: "Help", icon: <HelpMark cx={8} cy={8} r={6.8} /> },
];

function LayersPanel() {
  const cell = "border-b border-[#e8e8e8]";
  return (
    <section className="flex w-[248px] shrink-0 flex-col bg-[#ebebeb]">
      <header className="flex h-[19px] shrink-0 items-center justify-between border-b border-[#dadada] pr-[3px] pl-px text-[12px] text-[#7a7a7a]">
        <h2>Layers</h2>
        <Gear className="size-3" />
      </header>
      <div className="flex min-h-0 flex-1">
        <div className="flex min-w-0 flex-1 flex-col pr-[11px] pl-2">
          <div className="mt-[7px] grid w-[204px] grid-cols-10">
            {LAYER_TOOLS.map((t) => (
              <button key={t.name} aria-label={t.name} className="flex h-5 items-center justify-center">
                <svg viewBox="0 0 16 16" className="size-[15px]" fill="none">
                  {t.icon}
                </svg>
              </button>
            ))}
          </div>
          <label className="mt-[6px] flex h-5 shrink-0 items-center gap-[6px] rounded-[5px] bg-white px-[6px] shadow-[0_0_1px_rgba(0,0,0,0.45)]">
            <Search className="size-[13px] text-[#222]" strokeWidth={2.2} />
            <input aria-label="Search layers" placeholder="Search" className="min-w-0 flex-1 text-[12px] outline-none placeholder:text-[#bdbdbd]" />
          </label>
          <div className="mt-1 mb-[7px] min-h-0 flex-1 overflow-hidden bg-white">
            <table className="w-full table-fixed border-collapse text-left text-[11px] text-[#222]">
              <colgroup>
                <col className="w-[24px]" />
                <col className="w-[72px]" />
                <col className="w-[18px]" />
                <col className="w-[19px]" />
                <col className="w-[18px]" />
                <col className="w-[18px]" />
                <col />
              </colgroup>
              <thead>
                <tr className="h-[27px] border-b border-[#e2e2e2]">
                  <th />
                  <th className="font-normal">Layer</th>
                  {[0, 1, 2, 3].map((i) => (
                    <th key={i}>
                      <span className="block h-[14px] border-l border-[#dcdcdc]" />
                    </th>
                  ))}
                  <th className="text-[10px] font-normal">
                    <span className="block h-[14px] border-l border-[#dcdcdc] pl-px leading-[14px]">Material</span>
                  </th>
                </tr>
              </thead>
              <tbody>
                <tr className="h-[3px]">
                  <td colSpan={7} />
                </tr>
                {LAYERS.map((l) => (
                  <tr key={l.name} className={l.active ? "h-[18px] bg-[#dcdcdc] font-semibold text-[#111]" : "h-[18px]"}>
                    <td />
                    <td className={`whitespace-nowrap ${cell}`}>{l.name}</td>
                    <td className={cell}>
                      {l.active && (
                        <svg viewBox="0 0 13 11" className="ml-1 h-[11px] w-[13px]" fill="none">
                          <path d="M1 6.500 L4.500 10 L12 1" stroke="#111" strokeWidth="1.100" />
                        </svg>
                      )}
                    </td>
                    <td className={cell}>
                      {!l.active && (
                        <svg viewBox="0 0 9 12" className="ml-[6px] h-3 w-[9px]">
                          <path d="M3 8 C0 5.500 .5 .6 4.500 .6 C8.500 .6 9 5.500 6 8 Z" fill="#ffe14a" stroke="#a98a08" strokeWidth=".8" />
                          <path d="M3 8.500 H6 V10.500 L4.500 11.600 L3 10.500 Z" fill="#555" />
                        </svg>
                      )}
                    </td>
                    <td className={cell}>
                      {!l.active && (
                        <svg viewBox="0 0 11 12" className="ml-[5px] h-3 w-[11px]">
                          <path d="M6 5.500 V3 C6 .5 10 .5 10 3 V5" fill="none" stroke="#555" strokeWidth="1.100" />
                          <rect x=".5" y="5.500" width="8" height="6" fill="#fbdc5c" stroke="#b89a34" strokeWidth=".8" />
                        </svg>
                      )}
                    </td>
                    <td className={cell}>
                      <span className="ml-1 block size-3 border border-[#222]" style={{ backgroundColor: l.color }} />
                    </td>
                    <td className={cell}>
                      <span className="ml-[2px] block size-[15px] rounded-full border border-[#888] bg-white" />
                    </td>
                  </tr>
                ))}
              </tbody>
            </table>
          </div>
        </div>
        <SideTabs />
      </div>
    </section>
  );
}

function SideTabs() {
  return (
    <div className="flex w-[18px] shrink-0 flex-col bg-[#d6d7dc]">
      <button aria-label="Properties" className="flex h-8 items-center justify-center">
        <svg viewBox="0 0 14 14" className="size-[14px]">
          <Wheel cx={7} cy={7} r={6.2} />
        </svg>
      </button>
      <button aria-label="Display" className="flex h-[34px] items-center justify-center">
        <svg viewBox="0 0 14 14" className="size-[14px]">
          <rect x=".6" y="1" width="12.800" height="9.500" fill="#a5a5a5" stroke="#111" strokeWidth="1.200" />
          <path d="M5 10.500 H9 V12 H11 V13.500 H3 V12 H5 Z" fill="#333" />
        </svg>
      </button>
      <button aria-label="Layers" className="flex h-[34px] items-center justify-center rounded-r-[4px] bg-[#ebebeb]">
        <svg viewBox="3 3 20 20" className="size-[14px]" fill="none">
          <LayerWedge />
        </svg>
      </button>
      <button aria-label="Notes" className="flex h-8 items-center justify-center">
        <svg viewBox="0 0 14 14" className="size-[14px]" fill="none">
          <path d="M4.500 2.500 H11 M4.500 5.500 H11" stroke="#777" />
          <path d="M4.500 8.500 H11 M4.500 11.500 H11 M2 2.500 H3 M2 5.500 H3 M2 8.500 H3" stroke="#d9b91c" strokeWidth="1.200" />
          <path d="M12 .5 H13.500 V2 M.5 12 V13.500 H2" stroke="#333" />
        </svg>
      </button>
    </div>
  );
}

/* ---------- status bar ---------- */

function Toggle({ label, className }: { label: string; className: string }) {
  return (
    <button aria-pressed="true" className={`h-[18px] rounded-[2px] bg-[#f8f8f8] font-semibold text-[#111] ${className}`}>
      {label}
    </button>
  );
}

function StatusBar() {
  return (
    <footer className="flex h-6 shrink-0 items-center overflow-hidden bg-linear-to-b from-[#e9e9e9] to-[#d2d2d2] pl-[7px] text-[11px] whitespace-nowrap text-[#505052]">
      <button aria-label="Toggle left panel" className="w-[18px] shrink-0">
        <svg viewBox="0 0 11 11" className="size-[11px]">
          <rect x=".7" y=".7" width="9.600" height="9.600" fill="#fff" stroke="#222" strokeWidth="1.400" />
          <rect x="1" y="1" width="3.500" height="9" fill="#222" />
        </svg>
      </button>
      <button aria-label="Command list" className="w-[31px] shrink-0">
        <svg viewBox="0 0 14 12" className="h-3 w-[14px]" fill="none" stroke="#777">
          <path d="M4 1.500 H14 M4 6 H14 M4 10.500 H14 M.5 1.500 H2 M.5 6 H2 M.5 10.500 H2" strokeWidth="1.200" />
        </svg>
      </button>
      <button className="w-[65px] shrink-0 text-left">CPlane</button>
      <span className="w-20 shrink-0">x -58.82</span>
      <span className="w-[57px] shrink-0">y 0</span>
      <span className="w-[70px] shrink-0">z 23.51</span>
      <button className="w-[77px] shrink-0 text-left">Millimeters</button>
      <button className="flex w-[109px] shrink-0 items-center gap-[6px]">
        <span className="size-[14px] border border-[#222] bg-[#6f27b8]" />
        3D Körper
      </button>
      <button className="w-[59px] shrink-0 text-left">Grid Snap</button>
      <Toggle label="Ortho" className="w-11 shrink-0" />
      <button className="w-[52px] shrink-0">Planar</button>
      <Toggle label="Osnap" className="w-12 shrink-0" />
      <Toggle label="SmartTrack" className="ml-[2px] w-[75px] shrink-0" />
      <button className="ml-3 w-[104px] shrink-0 text-left">Gumball (CPlane)</button>
      <button className="flex w-[143px] shrink-0 items-center gap-[9px]">
        <svg viewBox="0 0 9 12" className="h-3 w-[9px]" fill="none" stroke="#999">
          <path d="M2.500 5.500 V3 C2.500 .5 6.500 .5 6.500 3 V5.500" />
          <rect x=".5" y="5.500" width="8" height="6" rx="1" />
        </svg>
        Auto CPlane (Object)
      </button>
      <button className="w-[85px] shrink-0 text-left">Record History</button>
      <Toggle label="Filter" className="w-[41px] shrink-0" />
      <span className="ml-[13px]">Absolute tolerance: 0.01</span>
      <button aria-label="Toggle right panel" className="mr-[7px] ml-auto shrink-0">
        <svg viewBox="0 0 11 11" className="size-[11px]">
          <rect x=".7" y=".7" width="9.600" height="9.600" fill="#fff" stroke="#222" strokeWidth="1.400" />
          <rect x="7.500" y="1" width="2.500" height="9" fill="#444" />
        </svg>
      </button>
    </footer>
  );
}

export default function App() {
  return (
    <div className="h-screen bg-[#1b1b1d] pb-px font-['Inter','Liberation_Sans',sans-serif]">
      <Defs />
      <div className="flex h-full flex-col overflow-hidden rounded-[9px] border-t-2 border-[#858786] bg-[#d6d7dc]">
        <header className="relative flex h-[26px] shrink-0 items-center justify-center border-b border-[#d0d0d0] bg-white text-[12px]">
          <div className="absolute left-[7px] flex gap-2">
            <button aria-label="Close" className="flex size-[11px] items-center justify-center rounded-full bg-[#8f8f8f]">
              <span className="size-1 rounded-full bg-[#222]" />
            </button>
            <button aria-label="Minimize" className="size-[11px] rounded-full bg-[#8f8f8f]" />
            <button aria-label="Zoom" className="size-[11px] rounded-full bg-[#8f8f8f]" />
          </div>
          <h1 className="text-[#b6b6b6]">
            <span className="font-bold text-[#222]">Untitled</span> — Edited
          </h1>
        </header>
        <div className="shrink-0 px-[3px]">
          <Toolbar />
        </div>
        <main className="flex min-h-0 flex-1 gap-[3px] px-[3px] pt-[2px]">
          <aside className="flex w-[111px] shrink-0 flex-col gap-[3px]">
            <CommandPanel />
            <OsnapPanel />
          </aside>
          <div className="flex min-w-0 flex-1 flex-col">
            <Viewports />
            <ViewportTabs />
          </div>
          <LayersPanel />
        </main>
        <StatusBar />
        <div className="h-[2px] shrink-0 bg-[#b6b8be]" />
      </div>
    </div>
  );
}
